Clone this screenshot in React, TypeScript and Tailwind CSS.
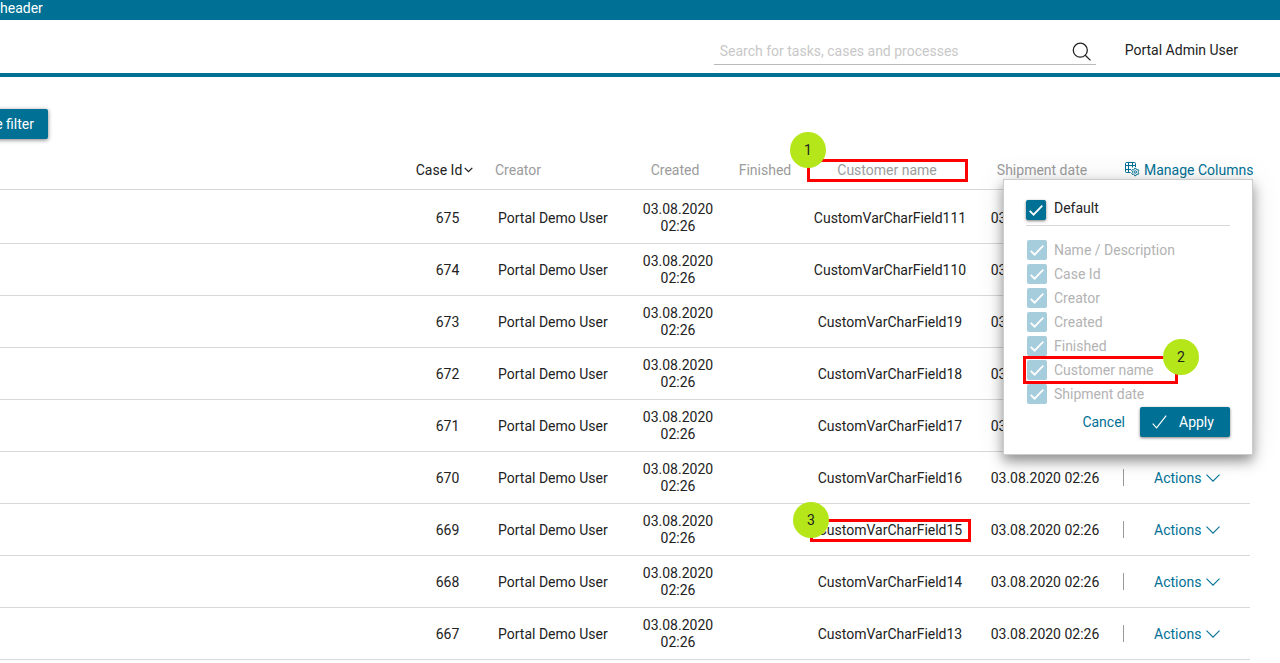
import { useState } from 'react';

const rows = [
  { id: 675, customer: 'CustomVarCharField111' },
  { id: 674, customer: 'CustomVarCharField110' },
  { id: 673, customer: 'CustomVarCharField19' },
  { id: 672, customer: 'CustomVarCharField18' },
  { id: 671, customer: 'CustomVarCharField17' },
  { id: 670, customer: 'CustomVarCharField16' },
  { id: 669, customer: 'CustomVarCharField15' },
  { id: 668, customer: 'CustomVarCharField14' },
  { id: 667, customer: 'CustomVarCharField13' },
];

const columns = ['Name / Description', 'Case Id', 'Creator', 'Created', 'Finished', 'Customer name', 'Shipment date'];

function Step({ value, className }: { value: number; className: string }) {
  return (
    <span className={`absolute z-20 flex size-9 items-center justify-center rounded-full bg-[#b4e61a] text-[#222] ${className}`}>
      {value}
    </span>
  );
}

function Tick() {
  return (
    <svg viewBox="0 0 20 20" className="pointer-events-none absolute inset-0 size-5" fill="none" stroke="#fff" strokeWidth="1.8">
      <path d="M3.7 10.8 7.6 14.7 16.3 5.7" />
    </svg>
  );
}

function ManageIcon() {
  return (
    <svg viewBox="0 0 16 16" className="-mt-0.5 size-4" fill="none" stroke="currentColor" strokeWidth="1">
      <path d="M6.500 11.500H2.500a1 1 0 0 1-1-1v-8a1 1 0 0 1 1-1h8a1 1 0 0 1 1 1V6M1 4.500h11M1 8.500h6M4.500 1v10.500M8.500 1v5.500" />
      <circle cx="11.300" cy="11" r="1.200" />
      <path d="M10.600 7.300h1.400l.3 1.100.8.5 1.100-.4.7 1.300-.8.7v1l.8.7-.7 1.300-1.100-.4-.8.5-.3 1.100h-1.400l-.3-1.100-.8-.5-1.100.4-.7-1.300.8-.7v-1l-.8-.7.7-1.300 1.100.4.8-.5z" />
    </svg>
  );
}

function ManageColumns() {
  const [useDefault, setUseDefault] = useState(true);

  return (
    <div className="absolute right-0 top-full z-10 -mt-px w-[250px] border border-[#ccc] bg-white px-[22px] pb-[17px] pt-5 text-left shadow-[0_6px_12px_rgba(0,0,0,0.42),0_0_30px_rgba(0,0,0,0.08)]">
      <div className="flex h-[26px] items-start gap-2 border-b border-[#d8d8d8]">
        <span className="relative size-5 shrink-0">
          <input
            id="col-default"
            type="checkbox"
            checked={useDefault}
            onChange={(e) => setUseDefault(e.target.checked)}
            className="block size-5 appearance-none rounded-xs bg-[#007095] shadow-[0_1px_3px_rgba(0,0,0,0.5)]"
          />
          {useDefault && <Tick />}
        </span>
        <label htmlFor="col-default" className="leading-4 text-[#222]">Default</label>
      </div>
      <ul className="mb-px mt-3">
        {columns.map((name, i) => (
          <li key={name} className="relative flex h-6 items-center gap-[7px] pl-px">
            <span className="relative size-5 shrink-0">
              <input id={`col-${i}`} type="checkbox" checked={useDefault} disabled readOnly className="block size-5 appearance-none rounded-xs bg-[#a6cddb]" />
              {useDefault && <Tick />}
            </span>
            <label htmlFor={`col-${i}`} className="text-[#b3b3b3]">{name}</label>
            {name === 'Customer name' && (
              <>
                <span className="absolute -left-[3px] -top-0.5 z-10 h-7 w-[155px] border-3 border-[#f00]" />
                <Step value={2} className="-top-[19px] left-[137px]" />
              </>
            )}
          </li>
        ))}
      </ul>
      <div className="flex items-center justify-end gap-[15px]">
        <button type="button" className="text-[#007095]">Cancel</button>
        <button type="button" className="flex h-[30px] w-[90px] items-center gap-3 rounded-xs bg-[#007095] pl-3 text-white shadow-[0_1px_3px_rgba(0,0,0,0.5)]">
          <svg viewBox="0 0 15 15" className="size-[15px]" fill="none" stroke="currentColor" strokeWidth="1.2">
            <path d="M.7 8.600 4.600 12.800 14.200.6" />
          </svg>
          Apply
        </button>
      </div>
    </div>
  );
}

export default function App() {
  const [open, setOpen] = useState(true);

  return (
    <div className="h-screen overflow-hidden bg-white font-[Roboto,sans-serif] text-sm text-[#222]">
      <div className="h-5 bg-[#007095] leading-4 text-white">header</div>
      <header className="flex h-[57px] items-center justify-end border-b-4 border-[#007095] pr-[42px] pt-[7px]">
        <form className="mr-[29px] flex h-[30px] w-[382px] items-center border-b border-[#b9b9b9] pl-1.5 pr-1 pt-0.5">
          <input
            type="search"
            aria-label="Search"
            placeholder="Search for tasks, cases and processes"
            className="min-w-0 flex-1 outline-none placeholder:text-[#c8c8c8]"
          />
          <button type="button" aria-label="Search">
            <svg viewBox="0 0 20 20" className="size-5" fill="none" stroke="#222" strokeWidth="1.3">
              <circle cx="8.3" cy="9.2" r="7" />
              <path d="m13.2 14.2 5.3 5.2" />
            </svg>
          </button>
        </form>
        <a href="#user">Portal Admin User</a>
      </header>

      <main className="pr-[30px] pt-8">
        <button type="button" className="-ml-1 flex h-[30px] w-[52px] items-center justify-end whitespace-nowrap rounded-xs bg-[#007095] px-0 pr-3.5 text-white shadow-[0_1px_4px_rgba(0,0,0,0.5)]">
          e filter
        </button>

        <table className="mt-3 w-full table-fixed border-separate border-spacing-0 text-center">
          <thead>
            <tr className="h-[39px] text-[#9b9b9b] *:border-b *:border-[#d8d8d8] *:font-normal">
              <th />
              <th className="w-[85px] pr-1.5 text-[#222]">
                <button type="button" className="inline-flex items-center gap-0.5 whitespace-nowrap">
                  Case Id
                  <svg viewBox="0 0 9 6" className="h-1.5 w-[9px]" fill="none" stroke="currentColor" strokeWidth="1.3">
                    <path d="m.7.9 3.8 3.8L8.3.9" />
                  </svg>
                </button>
              </th>
              <th className="w-[148px] pl-[5px] text-left">Creator</th>
              <th className="w-20 pr-1.5">Created</th>
              <th className="w-[90px] pl-1">Finished</th>
              <th className="relative w-[164px] pr-1.5">
                Customer name
                <span className="absolute -left-px right-1 top-2 h-[23px] border-3 border-[#f00]" />
                <Step value={1} className="-left-[18px] -top-[19px]" />
              </th>
              <th className="w-[146px] pr-1.5">Shipment date</th>
              <th className="w-[132px] pl-1.5">
                <div className="relative w-[129px]">
                  <button type="button" onClick={() => setOpen(!open)} className="flex items-center gap-1 whitespace-nowrap text-[#007095]">
                    <ManageIcon />
                    Manage Columns
                  </button>
                  {open && <ManageColumns />}
                </div>
              </th>
            </tr>
          </thead>
          <tbody className="before:block before:h-0.5">
            {rows.map((row) => (
              <tr key={row.id} className="h-[52px] *:border-b *:border-[#d8d8d8]">
                <td />
                <td>{row.id}</td>
                <td className="pl-2 text-left">Portal Demo User</td>
                <td className="px-1 leading-[17px]">03.08.2020 02:26</td>
                <td />
                <td className="relative">
                  {row.customer}
                  {row.id === 669 && (
                    <>
                      <span className="absolute left-0.5 right-px top-[15px] h-[23px] border-3 border-[#f00]" />
                      <Step value={3} className="-left-[15px] -top-0.5" />
                    </>
                  )}
                </td>
                <td>03.08.2020 02:26</td>
                <td className="pl-[5px]">
                  <div className="flex h-[17px] items-center border-l border-[#999] pl-[30px]">
                    <button type="button" className="flex items-center gap-[5px] text-[#007095]">
                      Actions
                      <svg viewBox="0 0 14 8" className="h-2 w-3.5" fill="none" stroke="currentColor" strokeWidth="1.1">
                        <path d="M.5.7 7 7.2 13.5.7" />
                      </svg>
                    </button>
                  </div>
                </td>
              </tr>
            ))}
          </tbody>
        </table>
      </main>
    </div>
  );
}
